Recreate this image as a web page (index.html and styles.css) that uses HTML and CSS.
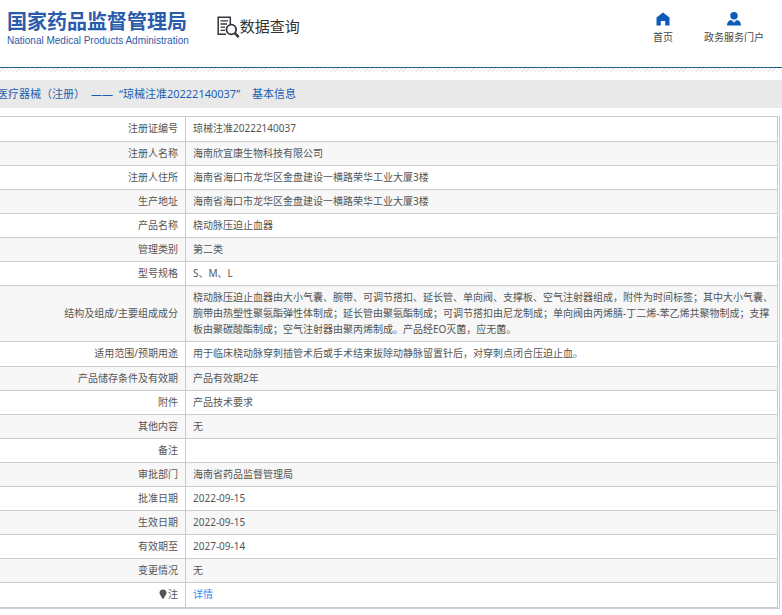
FILE: index.html
```html
<!DOCTYPE html>
<html lang="zh-CN">
<head>
    <meta charset="UTF-8">
    <meta name="viewport" content="width=device-width, initial-scale=1.0">
    <title>国家药品监督管理局数据查询</title>
    <link rel="stylesheet" href="styles.css">
</head>
<body>
    <header class="header">
        <div class="logo">
            <div class="logo-cn">国家药品监督管理局</div>
            <div class="logo-en">National Medical Products Administration</div>
        </div>
        <div class="search-title">
            <svg width="23" height="23" viewBox="0 0 23 23" fill="none" stroke="#33343c">
                <path d="M9 18.2H1.2V1.2H13.3V8" stroke-width="1.5"/>
                <path d="M3.5 4.8H11M3.5 8H10M3.5 11.2H8M3.5 14.4H8" stroke-width="1.3"/>
                <circle cx="14.3" cy="13.5" r="4.8" stroke-width="1.8"/>
                <path d="M17.8 17L21.6 21.2" stroke-width="2.6"/>
            </svg>
            <h1>数据查询</h1>
        </div>
        <nav class="nav">
            <a href="#">
                <svg width="14" height="14" viewBox="0 0 14 14" fill="#0b5cb9">
                    <path d="M7 .5L13.5 5.5V13.5H9.2V9H4.8V13.5H.5V5.5Z"/>
                </svg>
                首页
            </a>
            <a href="#">
                <svg width="14" height="14" viewBox="0 0 14 14" fill="#0b5cb9">
                    <circle cx="7" cy="3.8" r="3.7"/>
                    <path d="M0 13.5C0 10 1.8 8.4 4.4 8L7 10.8L9.6 8C12.2 8.4 14 10 14 13.5Z"/>
                    <path d="M6.2 8.4H7.8L7 9.6Z"/>
                </svg>
                政务服务门户
            </a>
        </nav>
    </header>
    <div class="stripes"></div>

    <h2 class="page-title"><span>医疗器械（注册）</span><span>——</span><span class="quoted">“琼械注准20222140037”</span><span>基本信息</span></h2>

    <main class="detail">
        <table>
            <tr class="tall"><th scope="row">注册证编号</th><td>琼械注准20222140037</td></tr>
            <tr><th scope="row">注册人名称</th><td>海南欣宜康生物科技有限公司</td></tr>
            <tr><th scope="row">注册人住所</th><td>海南省海口市龙华区金盘建设一横路荣华工业大厦3楼</td></tr>
            <tr><th scope="row">生产地址</th><td>海南省海口市龙华区金盘建设一横路荣华工业大厦3楼</td></tr>
            <tr><th scope="row">产品名称</th><td>桡动脉压迫止血器</td></tr>
            <tr><th scope="row">管理类别</th><td>第二类</td></tr>
            <tr><th scope="row">型号规格</th><td>S、M、L</td></tr>
            <tr><th scope="row">结构及组成/主要组成成分</th><td>桡动脉压迫止血器由大小气囊、腕带、可调节搭扣、延长管、单向阀、支撑板、空气注射器组成，附件为时间标签；其中大小气囊、腕带由热塑性聚氨酯弹性体制成；延长管由聚氨酯制成；可调节搭扣由尼龙制成；单向阀由丙烯腈-丁二烯-苯乙烯共聚物制成；支撑板由聚碳酸酯制成；空气注射器由聚丙烯制成。产品经EO灭菌，应无菌。</td></tr>
            <tr class="tall"><th scope="row">适用范围/预期用途</th><td>用于临床桡动脉穿刺插管术后或手术结束拔除动静脉留置针后，对穿刺点闭合压迫止血。</td></tr>
            <tr><th scope="row">产品储存条件及有效期</th><td>产品有效期2年</td></tr>
            <tr><th scope="row">附件</th><td>产品技术要求</td></tr>
            <tr><th scope="row">其他内容</th><td>无</td></tr>
            <tr><th scope="row">备注</th><td></td></tr>
            <tr><th scope="row">审批部门</th><td>海南省药品监督管理局</td></tr>
            <tr><th scope="row">批准日期</th><td>2022-09-15</td></tr>
            <tr><th scope="row">生效日期</th><td>2022-09-15</td></tr>
            <tr><th scope="row">有效期至</th><td>2027-09-14</td></tr>
            <tr><th scope="row">变更情况</th><td>无</td></tr>
            <tr class="tall">
                <th scope="row"><svg class="pin" width="8" height="10" viewBox="0 0 8 10" fill="#555"><path d="M4 .5A3.5 3.5 0 0 1 7.5 4C7.5 5.8 5.5 7 5 9.5H3C2.5 7 .5 5.8 .5 4A3.5 3.5 0 0 1 4 .5Z"/></svg>注</th>
                <td><a href="#">详情</a></td>
            </tr>
        </table>
    </main>
</body>
</html>
```

FILE: styles.css
```css
body {
    margin: 0;
    background: #fff;
    color: #555;
    font-family: "Noto Sans", "Noto Sans CJK SC", sans-serif;
    font-size: 10px;
    line-height: 16px;
}
a {
    color: #2f8df0;
    text-decoration: none;
}

/* header */
.header {
    display: flex;
    align-items: flex-start;
    height: 67px;
    padding: 0 18px 0 7px;
    border-bottom: 1px solid #1d6088;
}
.logo {
    padding-top: 10px;
    color: #2b5cab;
    white-space: nowrap;
}
.logo-cn {
    font-size: 20px;
    font-weight: bold;
    line-height: 24px;
}
.logo-en {
    font-family: "Liberation Sans", Arial, sans-serif;
    line-height: 14px;
}
.search-title {
    display: flex;
    margin-left: 28px;
    padding-top: 16px;
}
.search-title h1 {
    margin: 0;
    color: #333;
    font-size: 15px;
    font-weight: normal;
    line-height: 20px;
}
.nav {
    display: flex;
    gap: 31px;
    margin-left: auto;
    padding-top: 12px;
}
.nav a {
    display: flex;
    flex-direction: column;
    align-items: center;
    gap: 3px;
    color: #444;
}
.stripes {
    height: 4px;
    margin-bottom: 8px;
    background: repeating-linear-gradient(135deg, #fff 0, #fff 2px, #e8e8e8 2px, #e8e8e8 3px);
}

/* title bar */
.page-title {
    display: flex;
    gap: 6px;
    margin: 0 0 8px -3px;
    background: #e9e9e9;
    color: #1a5fb0;
    font-size: 11px;
    font-weight: normal;
    line-height: 28px;
    white-space: nowrap;
}
.quoted {
    margin-right: 6px;
}

/* detail table */
.detail {
    margin-right: 2px;
    padding-right: 1px;
    border: solid #ccccd2;
    border-width: 0 1px 1px 0;
}
table {
    width: 100%;
    border-collapse: collapse;
}
tr:nth-child(even) {
    background: #f7f7f7;
}
th, td {
    padding: 3px 0 4px 7px;
    border: 1px solid #ccc;
}
th {
    width: 171px;
    padding-right: 7px;
    border-left: none;
    font-weight: normal;
    text-align: right;
}
.tall > * {
    padding-bottom: 5px;
}
.pin {
    margin-right: 1px;
    vertical-align: -1px;
}
```
